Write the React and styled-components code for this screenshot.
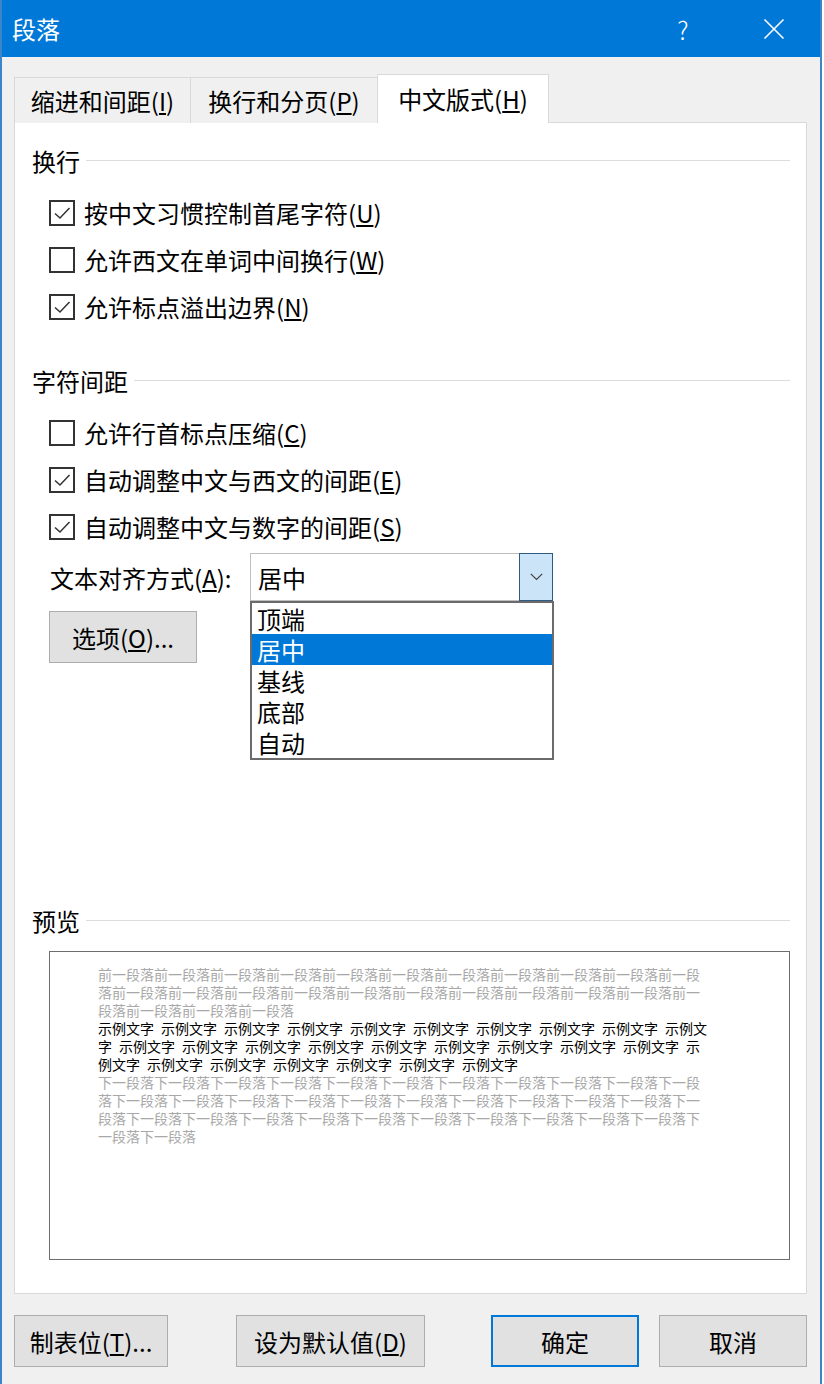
import React from 'react';
import styled, { createGlobalStyle } from 'styled-components';

const Global = createGlobalStyle`
  html, body { margin: 0; padding: 0; background: #ffffff; }
  body { font-family: "Noto Sans CJK SC", "Noto Sans", sans-serif; }
  *, *::before, *::after { box-sizing: border-box; }
`;

const FONT = `"Noto Sans CJK SC", "Noto Sans", sans-serif`;

const Window = styled.div`
  width: 822px;
  height: 1384px;
  overflow: hidden;
  display: flex;
  flex-direction: column;
  background: #f0f0f0;
  border-left: 2px solid #3a86c8;
  border-right: 2px solid #3a86c8;
  font-family: ${FONT};
  color: #000;
`;

const TitleBar = styled.div`
  height: 57px;
  flex: none;
  display: flex;
  align-items: center;
  background: #0078d7;
  color: #fff;
  padding-left: 10px;
`;

const Title = styled.div`
  font-size: 24px;
  line-height: 1;
  flex: 1;
`;

const TitleButton = styled.div`
  width: ${(p) => p.$w}px;
  height: 57px;
  display: flex;
  align-items: center;
  justify-content: center;
  font-size: 25px;
  font-weight: 300;
  color: #fff;
`;

const Body = styled.div`
  flex: 1;
  display: flex;
  flex-direction: column;
  padding: 17px 13px 0 12px;
`;

const TabStrip = styled.div`
  display: flex;
  align-items: flex-end;
  height: 49px;
  margin-bottom: -1px;
  position: relative;
  z-index: 1;
`;

const Tab = styled.div`
  width: ${(p) => p.$w}px;
  height: ${(p) => (p.$active ? 49 : 46)}px;
  margin-left: ${(p) => (p.$first ? 0 : -1)}px;
  display: flex;
  align-items: center;
  justify-content: center;
  font-size: 24px;
  background: ${(p) => (p.$active ? '#ffffff' : '#f0f0f0')};
  border: 1px solid #d9d9d9;
  border-bottom: none;
  padding-bottom: ${(p) => (p.$active ? 1 : 0)}px;
`;

const Panel = styled.div`
  background: #fff;
  border: 1px solid #d9d9d9;
  padding: 21px 16px 33px 17px;
  display: flex;
  flex-direction: column;
`;

const GroupHeader = styled.div`
  display: flex;
  align-items: center;
  gap: 6px;
  height: 32px;
  font-size: 24px;
  margin-top: ${(p) => p.$mt || 0}px;
  &::after {
    content: '';
    flex: 1;
    height: 1px;
    background: #dcdcdc;
  }
`;

const CheckList = styled.div`
  margin-top: 13px;
  margin-left: 17px;
  display: flex;
  flex-direction: column;
`;

const CheckRow = styled.div`
  height: 47px;
  display: flex;
  align-items: center;
  gap: 9px;
  font-size: 24px;
  white-space: nowrap;
`;

const Box = styled.div`
  width: 26px;
  height: 26px;
  flex: none;
  border: 2px solid #333;
  background: #fff;
  display: flex;
  align-items: center;
  justify-content: center;
`;

const AlignRow = styled.div`
  margin-top: 3px;
  margin-left: 17px;
  height: 48px;
  display: flex;
  align-items: center;
`;

const AlignLabel = styled.div`
  width: 201px;
  flex: none;
  font-size: 24px;
  padding-left: 1px;
  white-space: nowrap;
`;

const Combo = styled.div`
  position: relative;
  width: 303px;
  height: 48px;
  border: 1px solid #bfbfbf;
  background: #fff;
  display: flex;
  align-items: stretch;
`;

const ComboText = styled.div`
  flex: 1;
  display: flex;
  align-items: center;
  padding-left: 7px;
  font-size: 24px;
`;

const DropButton = styled.div`
  width: 34px;
  flex: none;
  margin: -1px -1px -1px 0;
  background: #cce4f7;
  border: 1px solid #2f5a82;
  display: flex;
  align-items: center;
  justify-content: center;
`;

const DropList = styled.div`
  position: absolute;
  top: 47px;
  left: -1px;
  width: 304px;
  border: 2px solid #6b6b6b;
  background: #fff;
  z-index: 5;
`;

const DropItem = styled.div`
  height: 31px;
  line-height: 31px;
  padding-left: 5px;
  font-size: 24px;
  background: ${(p) => (p.$selected ? '#0078d7' : 'transparent')};
  color: ${(p) => (p.$selected ? '#fff' : '#000')};
`;

const PushButton = styled.div`
  width: ${(p) => p.$w}px;
  height: 52px;
  flex: none;
  display: flex;
  align-items: center;
  justify-content: center;
  font-size: 24px;
  background: #e1e1e1;
  border: ${(p) => (p.$default ? '2px solid #0078d7' : '1px solid #adadad')};
  white-space: nowrap;
`;

const OptionsWrap = styled.div`
  margin-top: 10px;
  margin-left: 17px;
  display: flex;
`;

const PreviewBox = styled.div`
  margin-top: 15px;
  margin-left: 17px;
  height: 309px;
  border: 1px solid #6d6d6d;
  background: #fff;
  padding: 13px 0 0 48px;
`;

const PreviewLine = styled.div`
  font-size: 14px;
  line-height: 18px;
  height: 18px;
  white-space: pre;
  color: ${(p) => (p.$muted ? '#a8a8a8' : '#000')};
`;

const ButtonRow = styled.div`
  margin-top: 21px;
  display: flex;
  justify-content: space-between;
`;

const ButtonGroup = styled.div`
  display: flex;
  gap: ${(p) => p.$gap}px;
`;

const Check = () => (
  <svg width="20" height="20" viewBox="0 0 20 20">
    <polyline points="3,10.5 8,15 17.5,5" fill="none" stroke="#333" strokeWidth="1.5" />
  </svg>
);

const CheckItem = ({ checked, children }) => (
  <CheckRow>
    <Box>{checked && <Check />}</Box>
    <span>{children}</span>
  </CheckRow>
);

const split = (s, sizes) => {
  const out = [];
  let i = 0;
  sizes.forEach((n) => {
    out.push(s.slice(i, i + n));
    i += n;
  });
  return out;
};

const SP = '\u2002';
const before = split('前一段落'.repeat(25), [43, 43, 14]);
const after = split('下一段落'.repeat(34), [43, 43, 43, 7]);
const sample = [
  ('示例文字' + SP).repeat(9) + '示例文',
  '字' + SP + ('示例文字' + SP).repeat(9) + '示',
  '例文字' + SP + ('示例文字' + SP).repeat(5) + '示例文字',
];

export default function App() {
  return (
    <>
      <Global />
      <Window>
        <TitleBar>
          <Title>段落</Title>
          <TitleButton $w={90}>?</TitleButton>
          <TitleButton $w={92}>
            <svg width="22" height="22" viewBox="0 0 22 22">
              <path d="M1.5 1.5 L20.5 20.5 M20.5 1.5 L1.5 20.5" stroke="#fff" strokeWidth="1.6" fill="none" />
            </svg>
          </TitleButton>
        </TitleBar>
        <Body>
          <TabStrip>
            <Tab $first $w={177}>缩进和间距(<u>I</u>)</Tab>
            <Tab $w={188}>换行和分页(<u>P</u>)</Tab>
            <Tab $active $w={172}>中文版式(<u>H</u>)</Tab>
          </TabStrip>
          <Panel>
            <GroupHeader>换行</GroupHeader>
            <CheckList>
              <CheckItem checked>按中文习惯控制首尾字符(<u>U</u>)</CheckItem>
              <CheckItem>允许西文在单词中间换行(<u>W</u>)</CheckItem>
              <CheckItem checked>允许标点溢出边界(<u>N</u>)</CheckItem>
            </CheckList>

            <GroupHeader $mt={34}>字符间距</GroupHeader>
            <CheckList>
              <CheckItem>允许行首标点压缩(<u>C</u>)</CheckItem>
              <CheckItem checked>自动调整中文与西文的间距(<u>E</u>)</CheckItem>
              <CheckItem checked>自动调整中文与数字的间距(<u>S</u>)</CheckItem>
            </CheckList>

            <AlignRow>
              <AlignLabel>文本对齐方式(<u>A</u>):</AlignLabel>
              <Combo>
                <ComboText>居中</ComboText>
                <DropButton>
                  <svg width="13" height="8" viewBox="0 0 13 8">
                    <polyline points="0.8,0.8 6.5,6.5 12.2,0.8" fill="none" stroke="#404040" strokeWidth="1.2" />
                  </svg>
                </DropButton>
                <DropList>
                  <DropItem>顶端</DropItem>
                  <DropItem $selected>居中</DropItem>
                  <DropItem>基线</DropItem>
                  <DropItem>底部</DropItem>
                  <DropItem>自动</DropItem>
                </DropList>
              </Combo>
            </AlignRow>

            <OptionsWrap>
              <PushButton $w={148}>选项(<u>O</u>)...</PushButton>
            </OptionsWrap>

            <GroupHeader $mt={241}>预览</GroupHeader>
            <PreviewBox>
              {before.map((l, i) => (
                <PreviewLine key={'b' + i} $muted>{l}</PreviewLine>
              ))}
              {sample.map((l, i) => (
                <PreviewLine key={'s' + i}>{l}</PreviewLine>
              ))}
              {after.map((l, i) => (
                <PreviewLine key={'a' + i} $muted>{l}</PreviewLine>
              ))}
            </PreviewBox>
          </Panel>

          <ButtonRow>
            <ButtonGroup $gap={68}>
              <PushButton $w={154}>制表位(<u>T</u>)...</PushButton>
              <PushButton $w={189}>设为默认值(<u>D</u>)</PushButton>
            </ButtonGroup>
            <ButtonGroup $gap={20}>
              <PushButton $w={148} $default>确定</PushButton>
              <PushButton $w={148}>取消</PushButton>
            </ButtonGroup>
          </ButtonRow>
        </Body>
      </Window>
    </>
  );
}
